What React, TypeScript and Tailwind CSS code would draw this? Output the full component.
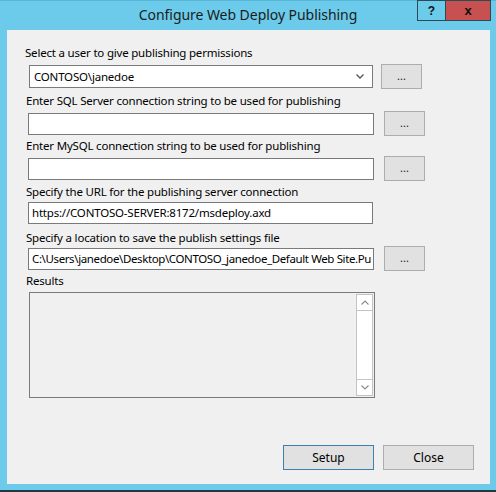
import React from "react";

const font = { fontFamily: '"Noto Sans", "Open Sans", sans-serif' };

function DotsButton({ className = "" }: { className?: string }) {
  return (
    <div
      className={`w-[41px] h-[25px] shrink-0 bg-[#e1e1e1] border border-[#adadad] flex items-center justify-center text-[11px] text-[#222] leading-none pb-[3px] ${className}`}
    >
      ...
    </div>
  );
}

function Label({ children, className = "" }: { children: React.ReactNode; className?: string }) {
  return (
    <div className={`h-[16px] text-[11.5px] tracking-[-0.2px] leading-[16px] text-black whitespace-nowrap ${className}`}>
      {children}
    </div>
  );
}

export default function App() {
  return (
    <div className="w-[496px] h-[492px] bg-[#6ccbea] flex flex-col border-b-2 border-[#1d3a44] overflow-hidden" style={font}>
      <div className="h-[30px] shrink-0 grid grid-cols-[1fr_auto_1fr] border-t border-[#58b7d8]">
        <div />
        <div className="pt-[4px] text-[14px] tracking-[-0.05px] leading-[20px] text-[#1b1b1b] whitespace-nowrap">Configure Web Deploy Publishing</div>
        <div className="flex justify-end items-start pr-[5px] -mt-px">
          <div className="w-[28px] h-[21px] border border-[#2a4a55] border-r-0 flex items-center justify-center text-[12px] font-bold text-[#111]" style={{ fontFamily: '"Liberation Sans", sans-serif' }}>
            ?
          </div>
          <div className="w-[46px] h-[21px] bg-[#c75050] border border-[#2a4a55] flex items-center justify-center text-[13px] font-bold text-[#111]" style={{ fontFamily: '"Liberation Sans", sans-serif' }}>
            x
          </div>
        </div>
      </div>
      <div className="ml-[7px] mr-[6px] h-[454px] bg-[#f0f0f0] flex flex-col pt-[15px]">
        <Label className="ml-[18px]">Select a user to give publishing permissions</Label>
        <div className="mt-[3px] flex items-center ml-[22px] gap-[8px]">
          <div className="w-[344px] h-[23px] bg-white border border-[#7a7a7a] flex items-center justify-between pl-[4px] pr-[8px] text-[11.5px] tracking-[-0.2px] text-black">
            <span>CONTOSO\janedoe</span>
            <svg width="8" height="5" viewBox="0 0 8 5">
              <path d="M0.5 0.5 L4 4 L7.5 0.5" fill="none" stroke="#555" strokeWidth="1.3" />
            </svg>
          </div>
          <DotsButton />
        </div>

        <Label className="ml-[19px] mt-[4px]">Enter SQL Server connection string to be used for publishing</Label>
        <div className="mt-[2px] flex items-center ml-[21px] gap-[10px]">
          <div className="w-[346px] h-[22px] bg-white border border-[#7a7a7a]" />
          <DotsButton />
        </div>

        <Label className="ml-[19px] mt-[2px]">Enter MySQL connection string to be used for publishing</Label>
        <div className="mt-[2px] flex items-center ml-[21px] gap-[10px]">
          <div className="w-[346px] h-[22px] bg-white border border-[#7a7a7a]" />
          <DotsButton />
        </div>

        <Label className="ml-[19px] mt-[3px]">Specify the URL for the publishing server connection</Label>
        <div className="mt-[2px] ml-[21px] w-[345px] h-[22px] bg-white border border-[#7a7a7a] flex items-center pl-[3px] text-[11.5px] tracking-[-0.2px] text-black whitespace-nowrap">
          https://CONTOSO-SERVER:8172/msdeploy.axd
        </div>

        <Label className="ml-[19px] mt-[6px]">Specify a location to save the publish settings file</Label>
        <div className="flex items-center ml-[21px] gap-[10px]">
          <div className="w-[346px] h-[22px] bg-white border border-[#7a7a7a] flex items-center pl-[3px] text-[11.5px] tracking-[-0.38px] text-black whitespace-nowrap overflow-hidden">
            C:\Users\janedoe\Desktop\CONTOSO_janedoe_Default Web Site.Pu
          </div>
          <DotsButton />
        </div>

        <Label className="ml-[19px] mt-[2px]">Results</Label>
        <div className="mt-[3px] ml-[22px] w-[346px] h-[106px] border border-[#7a7a7a] flex justify-end p-px">
          <div className="w-[17px] h-[102px] border border-[#c4c4c4] bg-white flex flex-col">
            <div className="h-[16px] border-b border-[#c4c4c4] flex items-center justify-center">
              <svg width="8" height="5" viewBox="0 0 8 5">
                <path d="M0.5 4.5 L4 1 L7.5 4.5" fill="none" stroke="#8a8a8a" strokeWidth="1.1" />
              </svg>
            </div>
            <div className="flex-1" />
            <div className="h-[16px] border-t border-[#c4c4c4] flex items-center justify-center">
              <svg width="8" height="5" viewBox="0 0 8 5">
                <path d="M0.5 0.5 L4 4 L7.5 0.5" fill="none" stroke="#8a8a8a" strokeWidth="1.1" />
              </svg>
            </div>
          </div>
        </div>

        <div className="mt-[47px] flex ml-[276px] gap-[9px]">
          <div className="w-[91px] h-[25px] bg-[#e1e1e1] border border-[#3c7fb1] flex items-center justify-center text-[12px] text-black">
            Setup
          </div>
          <div className="w-[91px] h-[25px] bg-[#e1e1e1] border border-[#adadad] flex items-center justify-center text-[12px] text-black">
            Close
          </div>
        </div>
      </div>
    </div>
  );
}
